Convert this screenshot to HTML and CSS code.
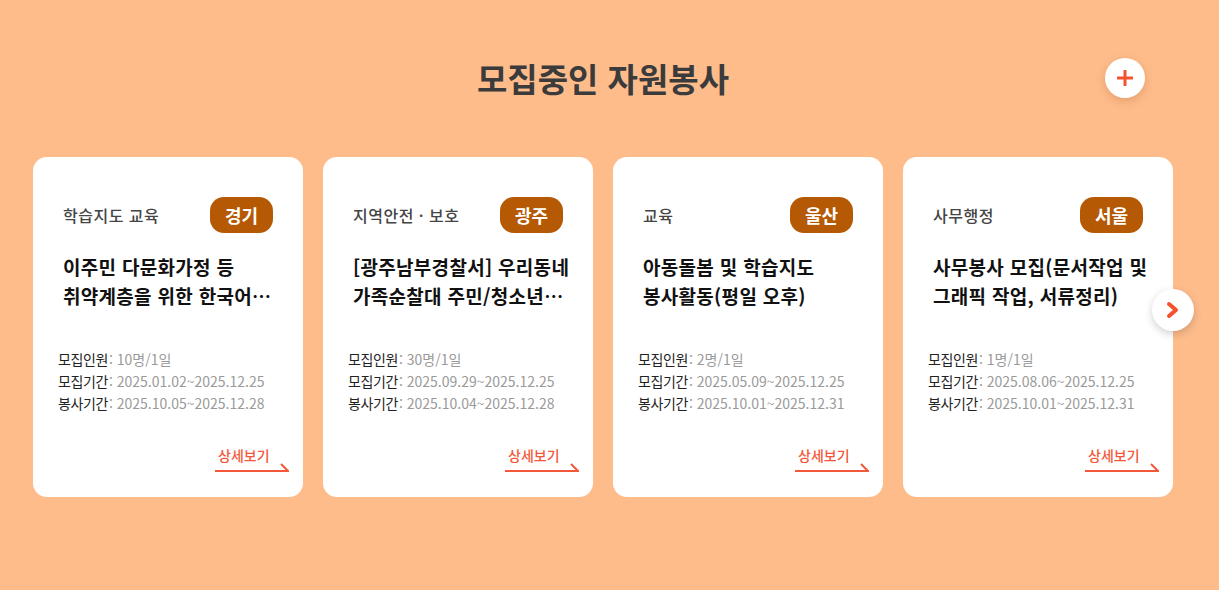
FILE: index.html
```html
<!DOCTYPE html>
<html lang="ko">
<head>
  <meta charset="UTF-8" />
  <meta name="viewport" content="width=device-width, initial-scale=1.0"/>
  <title>모집중인 자원봉사</title>
  <link rel="stylesheet" href="styles.css">
</head>
<body>
  <section class="volunteer">
    <header class="volunteer-head">
      <h2>모집중인 자원봉사</h2>
      <a href="#" class="more-btn" aria-label="더보기">
        <svg width="16" height="16" viewBox="0 0 16 16"><path d="M8 1v14M1 8h14" stroke="#F4512C" stroke-width="3" stroke-linecap="round"/></svg>
      </a>
    </header>

    <div class="card-slider">
      <div class="card-list">
        <article class="card">
          <div class="card-top">
            <span class="category">학습지도 교육</span>
            <span class="region">경기</span>
          </div>
          <h3 class="card-title">이주민 다문화가정 등 취약계층을 위한 한국어 교육 봉사자 모집</h3>
          <ul class="info">
            <li><b>모집인원</b><span>: 10명/1일</span></li>
            <li><b>모집기간</b><span>: 2025.01.02~2025.12.25</span></li>
            <li><b>봉사기간</b><span>: 2025.10.05~2025.12.28</span></li>
          </ul>
          <a href="#" class="detail">상세보기
            <svg width="74" height="9" viewBox="0 0 74 9"><path d="M0 8h73L66 1" fill="none" stroke="#F2583A" stroke-width="2"/></svg>
          </a>
        </article>

        <article class="card">
          <div class="card-top">
            <span class="category">지역안전 · 보호</span>
            <span class="region">광주</span>
          </div>
          <h3 class="card-title">[광주남부경찰서] 우리동네 가족순찰대 주민/청소년 모집</h3>
          <ul class="info">
            <li><b>모집인원</b><span>: 30명/1일</span></li>
            <li><b>모집기간</b><span>: 2025.09.29~2025.12.25</span></li>
            <li><b>봉사기간</b><span>: 2025.10.04~2025.12.28</span></li>
          </ul>
          <a href="#" class="detail">상세보기
            <svg width="74" height="9" viewBox="0 0 74 9"><path d="M0 8h73L66 1" fill="none" stroke="#F2583A" stroke-width="2"/></svg>
          </a>
        </article>

        <article class="card">
          <div class="card-top">
            <span class="category">교육</span>
            <span class="region">울산</span>
          </div>
          <h3 class="card-title">아동돌봄 및 학습지도 봉사활동(평일 오후)</h3>
          <ul class="info">
            <li><b>모집인원</b><span>: 2명/1일</span></li>
            <li><b>모집기간</b><span>: 2025.05.09~2025.12.25</span></li>
            <li><b>봉사기간</b><span>: 2025.10.01~2025.12.31</span></li>
          </ul>
          <a href="#" class="detail">상세보기
            <svg width="74" height="9" viewBox="0 0 74 9"><path d="M0 8h73L66 1" fill="none" stroke="#F2583A" stroke-width="2"/></svg>
          </a>
        </article>

        <article class="card">
          <div class="card-top">
            <span class="category">사무행정</span>
            <span class="region">서울</span>
          </div>
          <h3 class="card-title">사무봉사 모집(문서작업 및 그래픽 작업, 서류정리)</h3>
          <ul class="info">
            <li><b>모집인원</b><span>: 1명/1일</span></li>
            <li><b>모집기간</b><span>: 2025.08.06~2025.12.25</span></li>
            <li><b>봉사기간</b><span>: 2025.10.01~2025.12.31</span></li>
          </ul>
          <a href="#" class="detail">상세보기
            <svg width="74" height="9" viewBox="0 0 74 9"><path d="M0 8h73L66 1" fill="none" stroke="#F2583A" stroke-width="2"/></svg>
          </a>
        </article>
      </div>

      <button class="next-btn" aria-label="다음">
        <svg width="14" height="18" viewBox="0 0 14 18"><path d="M3 3l7 6-7 6" fill="none" stroke="#F4512C" stroke-width="4" stroke-linecap="round" stroke-linejoin="round"/></svg>
      </button>
    </div>
  </section>
</body>
</html>
```

FILE: styles.css
```css
* {
  margin: 0;
  padding: 0;
  box-sizing: border-box;
  font-family: 'Noto Sans CJK KR', 'Noto Sans', sans-serif;
}

body {
  background-color: #FEBC8B; /* peach */
  color: #222;
}

a {
  text-decoration: none;
}

ul {
  list-style: none;
}

.volunteer {
  padding: 58px 46px 0 33px;
}

.volunteer-head {
  position: relative;
  width: 1140px;
  text-align: center;
  margin-bottom: 59px;
}

.volunteer-head h2 {
  font-size: 33px;
  line-height: 40px;
  font-weight: 700;
  color: #3B3B3B;
}

.more-btn {
  position: absolute;
  right: 28px;
  top: 0;
  width: 40px;
  height: 40px;
  border-radius: 50%;
  background: #fff;
  box-shadow: 0 3px 8px rgba(150, 70, 20, 0.25);
  display: flex;
  align-items: center;
  justify-content: center;
}

.card-slider {
  position: relative;
  width: 1140px;
}

.card-list {
  display: flex;
  gap: 20px;
}

.card {
  width: 270px;
  height: 340px;
  background: #fff;
  border-radius: 14px;
  padding: 40px 30px 0 30px;
  display: flex;
  flex-direction: column;
}

.card-top {
  display: flex;
  justify-content: space-between;
  align-items: center;
  height: 36px;
}

.category {
  font-size: 16px;
  font-weight: 500;
  color: #444;
  letter-spacing: 0.5px;
}

.region {
  background: #B65905;
  color: #fff;
  font-size: 18px;
  font-weight: 700;
  line-height: 36px;
  height: 36px;
  padding: 0 15px;
  border-radius: 14px;
}

.card-title {
  margin: 19px -12px 0 0;
  font-size: 19px;
  line-height: 29px;
  font-weight: 700;
  color: #111;
  letter-spacing: 0.3px;
  word-break: keep-all;
  height: 58px;
  overflow: hidden;
  display: -webkit-box;
  -webkit-line-clamp: 2;
  -webkit-box-orient: vertical;
}

.info {
  margin: 38px 0 0 -5px;
  font-size: 14px;
  line-height: 22px;
}

.info b {
  font-weight: 400;
  color: #222;
  letter-spacing: -0.4px;
}

.info span {
  color: #9A9A9A;
  letter-spacing: 0;
  margin-left: 1px;
}

.detail {
  margin: 31px -16px 0 0;
  align-self: flex-end;
  display: flex;
  flex-direction: column;
  align-items: flex-start;
  font-size: 14px;
  font-weight: 500;
  color: #F2583A;
  line-height: 20px;
  width: 74px;
  padding-left: 3px;
}

.detail svg {
  display: block;
  margin: -2px 0 0 -3px;
}

.next-btn {
  position: absolute;
  right: -21px;
  top: 132px;
  width: 42px;
  height: 42px;
  border: none;
  border-radius: 50%;
  background: #fff;
  box-shadow: 0 3px 8px rgba(0, 0, 0, 0.18);
  display: flex;
  align-items: center;
  justify-content: center;
  cursor: pointer;
}
```
